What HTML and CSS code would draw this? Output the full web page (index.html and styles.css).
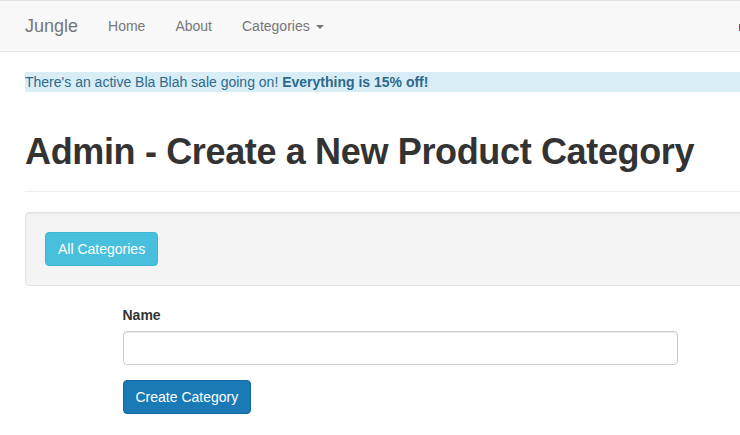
FILE: index.html
```html
<!DOCTYPE html>
<html>
<head>
<meta charset="utf-8">
<title>Jungle</title>
<link rel="stylesheet" href="styles.css">
</head>
<body>
<nav class="navbar">
  <div class="container nav-inner">
    <a class="brand" href="#">Jungle</a>
    <ul class="nav">
      <li><a href="#">Home</a></li>
      <li><a href="#">About</a></li>
      <li><a href="#">Categories <span class="caret"></span></a></li>
    </ul>
    <span class="nav-right"></span>
  </div>
</nav>
<div class="container">
  <p class="sale">There's an active Bla Blah sale going on! <strong>Everything is 15% off!</strong></p>
  <div class="page-header">
    <h1>Admin - Create a New Product Category</h1>
  </div>
  <div class="well">
    <a class="btn btn-info" href="#">All Categories</a>
  </div>
  <form class="row">
    <div class="col">
      <div class="form-group">
        <label for="name">Name</label>
        <input id="name" class="form-control" type="text">
      </div>
      <button type="button" class="btn btn-primary">Create Category</button>
    </div>
  </form>
</div>
</body>
</html>
```

FILE: styles.css
```css
* { box-sizing: border-box; }
html, body { margin: 0; padding: 0; }
body {
  font-family: "Liberation Sans", Arial, sans-serif;
  font-size: 14px;
  line-height: 1.42857;
  color: #333;
  background: #fff;
  overflow: hidden;
  width: 740px;
}
a { text-decoration: none; }
.container {
  width: 1170px;
  margin-left: 10px;
  padding: 0 15px;
}
.navbar {
  height: 52px;
  background: #f8f8f8;
  border-top: 1px solid #e2e2e2;
  border-bottom: 1px solid #e7e7e7;
  margin-bottom: 20px;
}
.nav-inner {
  display: flex;
  align-items: center;
  height: 50px;
  padding-left: 15px;
}
.brand {
  font-size: 18px;
  line-height: 20px;
  color: #777;
  padding: 15px 0;
  margin-right: 15px;
}
.nav {
  list-style: none;
  display: flex;
  margin: 0;
  padding: 0;
}
.nav a {
  display: block;
  padding: 15px;
  line-height: 20px;
  color: #777;
}
.caret {
  display: inline-block;
  width: 0;
  height: 0;
  margin-left: 2px;
  vertical-align: middle;
  border-top: 4px solid #777;
  border-left: 4px solid transparent;
  border-right: 4px solid transparent;
}
.nav-right {
  display: block;
  margin-left: 400px;
  margin-top: 3px;
  width: 6px;
  height: 7px;
  background: #a94442;
}
.sale {
  margin: 0;
  background: #d9edf7;
  color: #2c6a8c;
  line-height: 20px;
}
.page-header {
  margin: 40px 0 20px;
  padding-bottom: 9px;
  border-bottom: 1px solid #eee;
}
h1 {
  margin: 20px 0 10px;
  font-size: 36px;
  font-weight: bold;
  letter-spacing: -0.35px;
  line-height: 1.1;
  color: #333;
}
.well {
  min-height: 20px;
  padding: 19px;
  margin-bottom: 20px;
  background: #f4f4f4;
  border: 1px solid #e3e3e3;
  border-radius: 4px;
  box-shadow: inset 0 1px 1px rgba(0,0,0,.05);
}
.btn {
  display: inline-block;
  padding: 6px 12px;
  font-family: inherit;
  font-size: 14px;
  line-height: 20px;
  border: 1px solid transparent;
  border-radius: 4px;
  color: #fff;
  cursor: pointer;
}
.btn-info {
  background: #48c0dd;
  border-color: #3fb6d4;
}
.btn-primary {
  background: #197ab5;
  border-color: #15679d;
}
.row {
  margin: 0 -15px;
}
.col {
  width: 585px;
  margin-left: 97.5px;
  padding: 0 15px;
}
.form-group {
  margin-bottom: 15px;
}
label {
  display: inline-block;
  margin-bottom: 5px;
  font-weight: bold;
}
.form-control {
  display: block;
  width: 100%;
  height: 34px;
  padding: 6px 12px;
  font-family: inherit;
  font-size: 14px;
  border: 1px solid #ccc;
  border-radius: 4px;
  box-shadow: inset 0 1px 1px rgba(0,0,0,.075);
}
```
